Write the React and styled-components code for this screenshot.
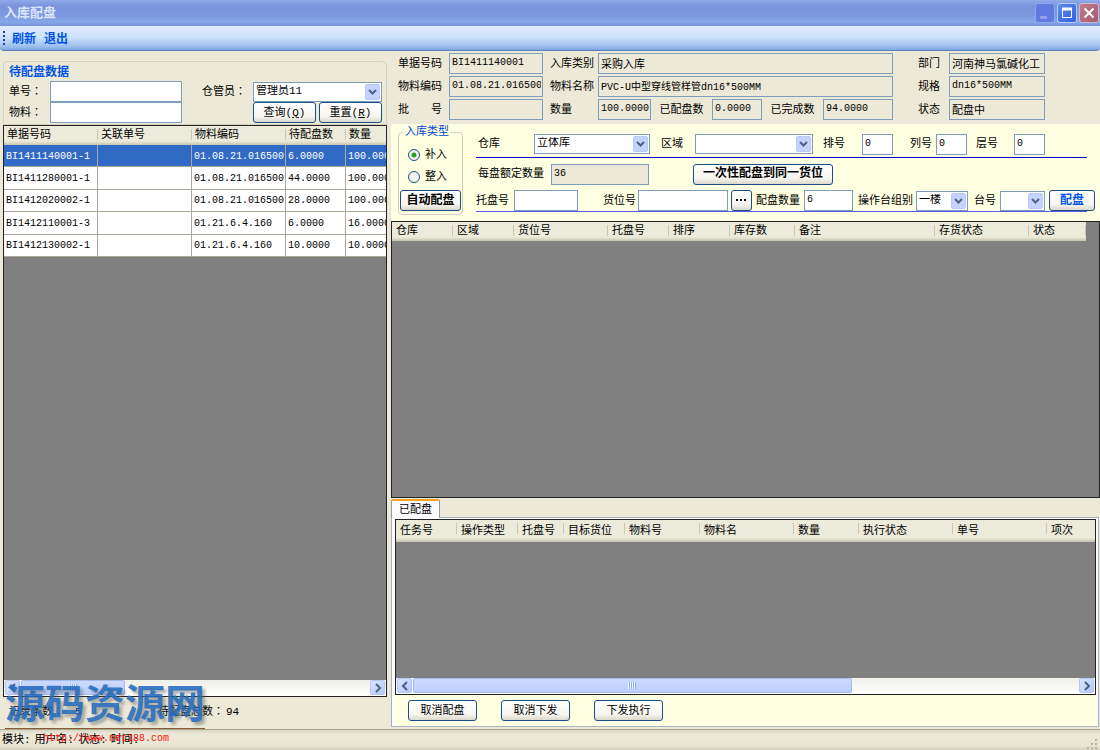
import React from "react";
import styled, { createGlobalStyle, css } from "styled-components";

const GlobalStyle = createGlobalStyle`
  * {
    box-sizing: border-box;
  }
  body {
    margin: 0;
    background: #ece9d8;
    color: #000;
    font-family: "Liberation Mono", "Noto Sans CJK SC", monospace;
    font-size: 11px;
    line-height: 14px;
  }
  button, input, select {
    font-family: inherit;
    color: inherit;
    margin: 0;
  }
`;

const Window = styled.div`
  min-height: 100vh;
  display: flex;
  flex-direction: column;
  position: relative;
`;

/* Title bar and menu */
const TitleBar = styled.header`
  height: 26px;
  display: flex;
  align-items: center;
  justify-content: space-between;
  padding: 0 1px 0 4px;
  background: linear-gradient(#8fa9ea, #7893dc 25%, #7c98e0 60%, #86a9ea 85%, #7590d8);
`;

const Title = styled.h1`
  margin: 0;
  padding-top: 2px;
  font-size: 13px;
  line-height: 18px;
  font-weight: bold;
  color: #dbe5fa;
`;

const WindowButtons = styled.div`
  display: flex;
  gap: 2px;
`;

const WindowButton = styled.button`
  width: 20px;
  height: 20px;
  padding: 0;
  display: flex;
  align-items: center;
  justify-content: center;
  border: 1px solid ${(props) => props.$edge};
  border-radius: 3px;
  background: ${(props) => props.$fill};
`;

const MenuBar = styled.nav`
  height: 25px;
  display: flex;
  align-items: center;
  gap: 8px;
  padding-left: 3px;
  border-bottom: 1px solid #5a7fb8;
  border-radius: 0 0 4px 4px;
  background: linear-gradient(#e0edff, #cbe0fb 50%, #9dbfee 85%, #7fa6df);
`;

const Grip = styled.div`
  width: 2px;
  height: 14px;
  margin-right: -1px;
  background: repeating-linear-gradient(#27418a 0 2px, transparent 2px 4px);
`;

const MenuButton = styled.button`
  padding: 0;
  border: 0;
  background: none;
  font-size: 12px;
  font-weight: bold;
  color: #0054e3;
`;

/* Shared controls */
const Label = styled.label`
  white-space: pre;
`;

/* the TC face sets the wide colon in the middle of its box */
const WideColon = styled.span`
  font-family: "Noto Sans CJK TC", sans-serif;
  line-height: 1;
`;

const Field = styled.input`
  width: ${(props) => (props.$w ? props.$w + "px" : "100%")};
  min-width: 0;
  height: 21px;
  padding: 0 1px 2px 2px;
  border: 1px solid #7f9db9;
  border-radius: 0;
  outline: none;
  font-size: ${(props) => (props.$cjk ? 11 : 10)}px;
  background: ${(props) => (props.readOnly ? "#ece9d8" : "#fff")};
`;

const SelectBox = styled.div`
  position: relative;
  width: ${(props) => props.$w}px;
  height: 20px;
  svg {
    position: absolute;
    top: 2px;
    right: 2px;
    pointer-events: none;
  }
`;

const SelectInput = styled.select`
  appearance: none;
  width: 100%;
  height: 20px;
  padding: 0 16px 2px 2px;
  border: 1px solid #7f9db9;
  border-radius: 0;
  outline: none;
  background: #fff;
  font-size: 11px;
`;

const Button = styled.button`
  width: ${(props) => props.$w}px;
  height: 21px;
  padding: 0;
  flex: none;
  border: 1px solid #1c4f86;
  border-radius: 3px;
  background: linear-gradient(#fff, #f6f5f0 70%, #dbd8cb);
  font-size: 11px;
  line-height: 14px;
  white-space: nowrap;
  ${(props) => props.$bold && css`
    font-size: 12px;
    font-weight: bold;
  `}
  ${(props) => props.$blue && css`
    color: #0054e3;
  `}
`;

/* Two columns below the menu */
const Main = styled.main`
  flex: 1;
  display: grid;
  grid-template-columns: 388px minmax(0, 1fr);
  gap: 3px;
`;

const LeftPane = styled.section`
  display: flex;
  flex-direction: column;
  padding: 10px 1px 0 3px;
`;

const SearchBox = styled.form`
  height: 64px;
  padding: 3px 4px 0 5px;
  border: 1px solid #d5d2bf;
  border-radius: 4px 4px 0 0;
`;

const BoxTitle = styled.h2`
  margin: 0;
  font-size: 12px;
  line-height: 16px;
  color: #0054e3;
`;

const SearchGrid = styled.div`
  display: grid;
  grid-template-columns: 41px 132px 1fr 129px;
  grid-auto-rows: 21px;
  align-items: center;
`;

const KeeperLabel = styled(Label)`
  padding-left: 20px;
`;

const ButtonPair = styled.div`
  grid-column: 4;
  display: flex;
  gap: 3px;
`;

/* Data grids */
const GridFrame = styled.div`
  flex: ${(props) => props.$grow || 1} 1 0;
  min-height: 0;
  display: flex;
  flex-direction: column;
  overflow: hidden;
  border: 1px solid #222;
  background: #808080;
`;

const GridBody = styled.div`
  flex: 1;
  overflow: hidden;
`;

const Table = styled.table`
  width: ${(props) => props.$w};
  height: ${(props) => (props.$h ? props.$h + "px" : "auto")};
  table-layout: fixed;
  border-collapse: separate;
  border-spacing: 0;
`;

const HeadRow = styled.tr`
  height: ${(props) => props.$h}px;
`;

const Th = styled.th`
  height: inherit;
  padding: 0 0 1px ${(props) => props.$pad || 3}px;
  text-align: left;
  font-weight: normal;
  white-space: nowrap;
  overflow: hidden;
  background:
    linear-gradient(#c9c6b4, #c9c6b4) right 3px / 1px 11px no-repeat,
    linear-gradient(#ebeadb 80%, #dedbc9 88%, #c5c2b0);
`;

const Td = styled.td`
  padding: 2px 0 0 2px;
  border-right: 1px solid #aca899;
  border-bottom: 1px solid #aca899;
  font-size: 10px;
  white-space: nowrap;
  overflow: hidden;
`;

const Row = styled.tr`
  background: ${(props) => (props.$selected ? "#316ac5" : "#fff")};
  color: ${(props) => (props.$selected ? "#fff" : "#000")};
`;

const ScrollTrack = styled.div`
  height: 16px;
  flex: none;
  display: flex;
  gap: 1px;
  padding: 0 1px;
  background: linear-gradient(#f0efe8, #fff);
`;

const ScrollArrow = styled.button`
  width: 15px;
  height: 15px;
  padding: 0;
  display: flex;
  align-items: center;
  justify-content: center;
  border: 1px solid #b5c8f5;
  border-radius: 2px;
  background: linear-gradient(135deg, #dbe5ff, #b3c8fa);
`;

const ScrollLane = styled.div`
  flex: 1;
`;

const ScrollThumb = styled.div`
  width: ${(props) => props.$size};
  height: 15px;
  display: flex;
  align-items: center;
  justify-content: center;
  border: 1px solid #a5bbf0;
  border-radius: 2px;
  background: linear-gradient(#cbdafe, #bdcffb);
`;

const Ridges = styled.div`
  width: 8px;
  height: 7px;
  background: repeating-linear-gradient(90deg, #eef4fe 0 1px, #8cb0f8 1px 2px);
`;

const Totals = styled.div`
  height: 32px;
  display: flex;
  align-items: center;
  padding: 0 0 2px 6px;
`;

const Total = styled.span`
  width: ${(props) => props.$w}px;
  display: flex;
  gap: ${(props) => props.$gap}px;
`;

/* Right pane */
const RightPane = styled.section`
  display: flex;
  flex-direction: column;
  min-width: 0;
`;

const OrderInfo = styled.div`
  display: grid;
  grid-template-columns: 51px 94px 48px minmax(200px, 1fr) 31px 96px;
  grid-auto-rows: 21px;
  row-gap: 2px;
  align-items: center;
  height: 73px;
  padding: 2px 55px 0 7px;
`;

const MidLabel = styled(Label)`
  padding-left: 7px;
  margin-right: -7px;
`;

const MidCell = styled.div`
  display: flex;
  align-items: center;
  justify-content: space-between;
  margin: 0 25px 0 7px;
`;

const Allocation = styled.form`
  display: flex;
  height: 97px;
  background: #ffffe1;
`;

const TypeSet = styled.fieldset`
  width: 65px;
  height: 90px;
  margin: 1px 13px 0 7px;
  padding: 5px 1px 0;
  border: 1px solid #d0d0bf;
  border-radius: 4px;
  legend {
    margin-left: 3px;
    padding: 0 2px;
    color: #0046d5;
  }
`;

const RadioLabel = styled.label`
  height: 22px;
  display: flex;
  align-items: center;
  gap: 5px;
  padding-left: 8px;
`;

const Radio = styled.input`
  appearance: none;
  width: 12px;
  height: 12px;
  margin: 0;
  border: 1px solid #1c5180;
  border-radius: 50%;
  background: #f4f4f0;
  &:checked {
    background: radial-gradient(circle, #21a121 0 2px, #f4f4f0 3px);
  }
`;

const AutoButton = styled(Button)`
  margin-top: 2px;
`;

const FilterRows = styled.div`
  flex: 1;
  min-width: 0;
  padding-top: 9px;
`;

const FilterRow = styled.div`
  height: ${(props) => props.$h}px;
  display: flex;
  align-items: center;
  padding: 0 5px 2px ${(props) => props.$left || 0}px;
`;

const Rule = styled.hr`
  height: 1px;
  margin: 0 13px 0 0;
  border: 0;
  background: ${(props) => props.$color};
`;

const Gap = styled.span`
  flex: 0 1 ${(props) => props.$w}px;
`;

const FixedLabel = styled(Label)`
  flex: none;
  width: ${(props) => props.$w}px;
`;

/* Tab with allocated pallets */
const Allocated = styled.div`
  flex: 230 1 0;
  min-height: 0;
  display: flex;
  flex-direction: column;
  padding: 1px 1px 2px 0;
`;

const Tab = styled.button`
  align-self: flex-start;
  width: 49px;
  height: 19px;
  margin-bottom: -1px;
  padding: 0;
  border: 1px solid #919b9c;
  border-top: 2px solid #ffa41c;
  border-bottom: 0;
  border-radius: 2px 2px 0 0;
  background: #fcfcfe;
  font-size: 11px;
  line-height: 14px;
  z-index: 1;
`;

const TabPanel = styled.div`
  flex: 1;
  min-height: 0;
  display: flex;
  flex-direction: column;
  padding: 1px 2px 0 3px;
  border: 1px solid #a5b3bd;
  background: #fcfcfe;
`;

const Actions = styled.div`
  height: 31px;
  display: flex;
  gap: 24px;
  padding: 5px 0 0 13px;
  background: #ffffe1;
`;

const StatusBar = styled.footer`
  height: 21px;
  display: flex;
  align-items: center;
  gap: 4px;
  padding: 0 2px;
  border-top: 1px solid #a9a694;
  background: linear-gradient(#d8d5c3, #ece9d8 20%, #e8e5d3 80%, #d4d1bf);
  svg {
    margin-left: auto;
    align-self: flex-end;
  }
`;

/* Site mark laid over the lower left corner */
const SiteMark = styled.div`
  position: absolute;
  left: 5px;
  bottom: 4px;
  width: 200px;
  pointer-events: none;
`;

const SiteName = styled.div`
  height: 46px;
  border-bottom: 1px solid #8a5a33;
  font-size: 40px;
  line-height: 50px;
  font-weight: bold;
  white-space: nowrap;
  color: rgba(38, 108, 190, 0.88);
  text-shadow: 3px 3px 3px rgba(90, 90, 90, 0.45);
`;

const SiteUrl = styled.div`
  padding: 3px 0 0 38px;
  font-size: 10px;
  color: #ff1010;
`;

const orders = [
  ["BI1411140001-1", "", "01.08.21.016500", "6.0000", "100.0000"],
  ["BI1411280001-1", "", "01.08.21.016500", "44.0000", "100.0000"],
  ["BI1412020002-1", "", "01.08.21.016500", "28.0000", "100.0000"],
  ["BI1412110001-3", "", "01.21.6.4.160", "6.0000", "16.0000"],
  ["BI1412130002-1", "", "01.21.6.4.160", "10.0000", "10.0000"],
];

const orderColumns = [["单据号码", 94], ["关联单号", 94], ["物料编码", 94], ["待配盘数", 60], ["数量", 61]];

const stockColumns = [
  ["仓库", 61], ["区域", 61], ["货位号", 94], ["托盘号", 61], ["排序", 61],
  ["库存数", 65], ["备注", 140], ["存货状态", 94], ["状态", 57],
];

const taskColumns = [
  ["任务号", 61], ["操作类型", 61], ["托盘号", 46], ["目标货位", 61], ["物料号", 75],
  ["物料名", 94], ["数量", 65], ["执行状态", 94], ["单号", 94], ["项次", 94],
];

const sumWidth = (columns) => columns.reduce((sum, col) => sum + col[1], 0) + "px";

function ColumnHead({ columns, height, pad }) {
  return (
    <>
      <colgroup>
        {columns.map(([name, width]) => <col key={name} width={width} />)}
      </colgroup>
      <thead>
        <HeadRow $h={height}>
          {columns.map(([name]) => <Th key={name} $pad={pad}>{name}</Th>)}
        </HeadRow>
      </thead>
    </>
  );
}

function Select({ id, width, value }) {
  return (
    <SelectBox $w={width}>
      <SelectInput id={id} defaultValue={value}>
        <option value={value}>{value}</option>
      </SelectInput>
      <svg width="15" height="16" viewBox="0 0 15 16">
        <rect x="0.5" y="0.5" width="14" height="15" rx="1.5" fill="#c3d3fd" stroke="#b7cbf8" />
        <path d="M4 6l3.5 3.5L11 6" fill="none" stroke="#4d6185" strokeWidth="2" />
      </svg>
    </SelectBox>
  );
}

function ScrollBar({ size }) {
  return (
    <ScrollTrack>
      <ScrollArrow type="button" aria-label="向左">
        <svg width="8" height="10" viewBox="0 0 8 10">
          <path d="M6 1L2 5l4 4" fill="none" stroke="#4d6185" strokeWidth="2" />
        </svg>
      </ScrollArrow>
      <ScrollLane>
        <ScrollThumb $size={size}><Ridges /></ScrollThumb>
      </ScrollLane>
      <ScrollArrow type="button" aria-label="向右">
        <svg width="8" height="10" viewBox="0 0 8 10">
          <path d="M2 1l4 4-4 4" fill="none" stroke="#4d6185" strokeWidth="2" />
        </svg>
      </ScrollArrow>
    </ScrollTrack>
  );
}

function Header() {
  return (
    <>
      <TitleBar>
        <Title>入库配盘</Title>
        <WindowButtons>
          <WindowButton aria-label="最小化" $edge="#8ea6ee" $fill="#5f7be0">
            <svg width="18" height="18"><rect x="4" y="12" width="7" height="3" fill="#8f9fee" /></svg>
          </WindowButton>
          <WindowButton aria-label="最大化" $edge="#b9ccf8" $fill="linear-gradient(135deg, #5f8bf0, #2f62dc)">
            <svg width="18" height="18">
              <path d="M4.5 4.5h9v9h-9z" fill="none" stroke="#fff" />
              <path d="M4 5h10" stroke="#fff" strokeWidth="3" />
            </svg>
          </WindowButton>
          <WindowButton aria-label="关闭" $edge="#d5b9cf" $fill="linear-gradient(135deg, #c07a8c, #a85a6c)">
            <svg width="18" height="18">
              <path d="M4.5 4.5l9 9M13.5 4.5l-9 9" stroke="#fff" strokeWidth="2" />
            </svg>
          </WindowButton>
        </WindowButtons>
      </TitleBar>
      <MenuBar>
        <Grip />
        <MenuButton>刷新</MenuButton>
        <MenuButton>退出</MenuButton>
      </MenuBar>
    </>
  );
}

function Left() {
  return (
    <LeftPane>
      <SearchBox onSubmit={(e) => e.preventDefault()}>
        <BoxTitle>待配盘数据</BoxTitle>
        <SearchGrid>
          <Label htmlFor="order">单号<WideColon>：</WideColon></Label>
          <Field id="order" />
          <KeeperLabel htmlFor="keeper">仓管员<WideColon>：</WideColon></KeeperLabel>
          <Select id="keeper" width={129} value="管理员11" />
          <Label htmlFor="material">物料<WideColon>：</WideColon></Label>
          <Field id="material" />
          <ButtonPair>
            <Button $w={63}>查询(<u>Q</u>)</Button>
            <Button $w={63} type="reset">重置(<u>R</u>)</Button>
          </ButtonPair>
        </SearchGrid>
      </SearchBox>
      <GridFrame>
        <GridBody>
          <Table $w={sumWidth(orderColumns)} $h={131}>
            <ColumnHead columns={orderColumns} height={19} />
            <tbody>
              {orders.map((order, index) => (
                <Row key={order[0]} $selected={index === 0}>
                  {order.map((value, i) => <Td key={i}>{value}</Td>)}
                </Row>
              ))}
            </tbody>
          </Table>
        </GridBody>
        <ScrollBar size="104px" />
      </GridFrame>
      <Totals>
        <Total $w={149} $gap={11}><span>记录条数<WideColon>：</WideColon></span><span>5</span></Total>
        <Total $gap={2}><span>待配盘总数<WideColon>：</WideColon></span><span>94</span></Total>
      </Totals>
    </LeftPane>
  );
}

function Info() {
  return (
    <OrderInfo>
      <Label htmlFor="bill">单据号码</Label>
      <Field id="bill" readOnly value="BI1411140001" />
      <MidLabel htmlFor="kind">入库类别</MidLabel>
      <MidCell><Field id="kind" readOnly $cjk value="采购入库" /></MidCell>
      <Label htmlFor="dept">部门</Label>
      <Field id="dept" readOnly $cjk value="河南神马氯碱化工" />

      <Label htmlFor="code">物料编码</Label>
      <Field id="code" readOnly value="01.08.21.016500" />
      <MidLabel htmlFor="name">物料名称</MidLabel>
      <MidCell><Field id="name" readOnly value="PVC-U中型穿线管样管dn16*500MM" /></MidCell>
      <Label htmlFor="spec">规格</Label>
      <Field id="spec" readOnly value="dn16*500MM" />

      <Label htmlFor="batch">批{"\u3000\u3000"}号</Label>
      <Field id="batch" readOnly value="" />
      <MidLabel htmlFor="count">数量</MidLabel>
      <MidCell>
        <Field id="count" readOnly $w={53} value="100.0000" />
        <Label htmlFor="placed">已配盘数</Label>
        <Field id="placed" readOnly $w={50} value="0.0000" />
        <Label htmlFor="done">已完成数</Label>
        <Field id="done" readOnly $w={70} value="94.0000" />
      </MidCell>
      <Label htmlFor="state">状态</Label>
      <Field id="state" readOnly $cjk value="配盘中" />
    </OrderInfo>
  );
}

function Filters() {
  return (
    <Allocation onSubmit={(e) => e.preventDefault()}>
      <TypeSet>
        <legend>入库类型</legend>
        <RadioLabel><Radio type="radio" name="type" defaultChecked />补入</RadioLabel>
        <RadioLabel><Radio type="radio" name="type" />整入</RadioLabel>
        <AutoButton type="button" $w={61} $bold>自动配盘</AutoButton>
      </TypeSet>
      <FilterRows>
        <FilterRow $h={24} $left={2}>
          <FixedLabel $w={56} htmlFor="store">仓库</FixedLabel>
          <Select id="store" width={116} value="立体库" />
          <Gap $w={11} />
          <FixedLabel $w={34} htmlFor="area">区域</FixedLabel>
          <Select id="area" width={118} value="" />
          <Gap $w={10} />
          <FixedLabel $w={39} htmlFor="line">排号</FixedLabel>
          <Field id="line" $w={31} defaultValue="0" />
          <Gap $w={17} />
          <FixedLabel $w={26} htmlFor="column">列号</FixedLabel>
          <Field id="column" $w={31} defaultValue="0" />
          <Gap $w={9} />
          <FixedLabel $w={38} htmlFor="layer">层号</FixedLabel>
          <Field id="layer" $w={31} defaultValue="0" />
        </FilterRow>
        <Rule $color="#0808d0" />
        <FilterRow $h={34} $left={2}>
          <FixedLabel $w={73} htmlFor="quota">每盘额定数量</FixedLabel>
          <Field id="quota" $w={98} readOnly value="36" />
          <Gap $w={44} />
          <Button type="button" $w={140} $bold>一次性配盘到同一货位</Button>
        </FilterRow>
        <FilterRow $h={19}>
          <FixedLabel $w={38} htmlFor="pallet">托盘号</FixedLabel>
          <Field id="pallet" $w={64} />
          <Gap $w={25} />
          <FixedLabel $w={35} htmlFor="slot">货位号</FixedLabel>
          <Field id="slot" $w={90} />
          <Gap $w={3} />
          <Button type="button" $w={21} $bold aria-label="选择货位">
            <svg width="11" height="5"><path d="M0 0h2v2H0zM4 0h2v2H4zM8 0h2v2H8z" /></svg>
          </Button>
          <Gap $w={4} />
          <FixedLabel $w={48} htmlFor="amount">配盘数量</FixedLabel>
          <Field id="amount" $w={49} defaultValue="6" />
          <Gap $w={5} />
          <FixedLabel $w={58} htmlFor="group">操作台组别</FixedLabel>
          <Select id="group" width={52} value="一楼" />
          <Gap $w={6} />
          <FixedLabel $w={26} htmlFor="desk">台号</FixedLabel>
          <Select id="desk" width={45} value="" />
          <Gap $w={4} />
          <Button $w={46} $bold $blue>配盘</Button>
        </FilterRow>
        <Rule $color="#5a5af0" />
      </FilterRows>
    </Allocation>
  );
}

function Right() {
  return (
    <RightPane>
      <Info />
      <Filters />
      <GridFrame $grow={278}>
        <Table $w={sumWidth(stockColumns)}>
          <ColumnHead columns={stockColumns} height={19} pad={4} />
        </Table>
      </GridFrame>
      <Allocated>
        <Tab>已配盘</Tab>
        <TabPanel>
          <GridFrame>
            <GridBody>
              <Table $w={sumWidth(taskColumns)}>
                <ColumnHead columns={taskColumns} height={22} pad={4} />
              </Table>
            </GridBody>
            <ScrollBar size="66%" />
          </GridFrame>
          <Actions>
            <Button $w={69}>取消配盘</Button>
            <Button $w={69}>取消下发</Button>
            <Button $w={69}>下发执行</Button>
          </Actions>
        </TabPanel>
      </Allocated>
    </RightPane>
  );
}

export default function App() {
  return (
    <Window>
      <GlobalStyle />
      <Header />
      <Main>
        <Left />
        <Right />
      </Main>
      <StatusBar>
        <span>模块:</span>
        <span>用户名:</span>
        <span>状态:</span>
        <span>时间:</span>
        <svg width="11" height="11" fill="#b8b4a2">
          <path d="M8 0h2v2H8zM8 4h2v2H8zM4 4h2v2H4zM8 8h2v2H8zM4 8h2v2H4zM0 8h2v2H0z" />
        </svg>
      </StatusBar>
      <SiteMark>
        <SiteName>源码资源网</SiteName>
        <SiteUrl>http://www.net188.com</SiteUrl>
      </SiteMark>
    </Window>
  );
}
